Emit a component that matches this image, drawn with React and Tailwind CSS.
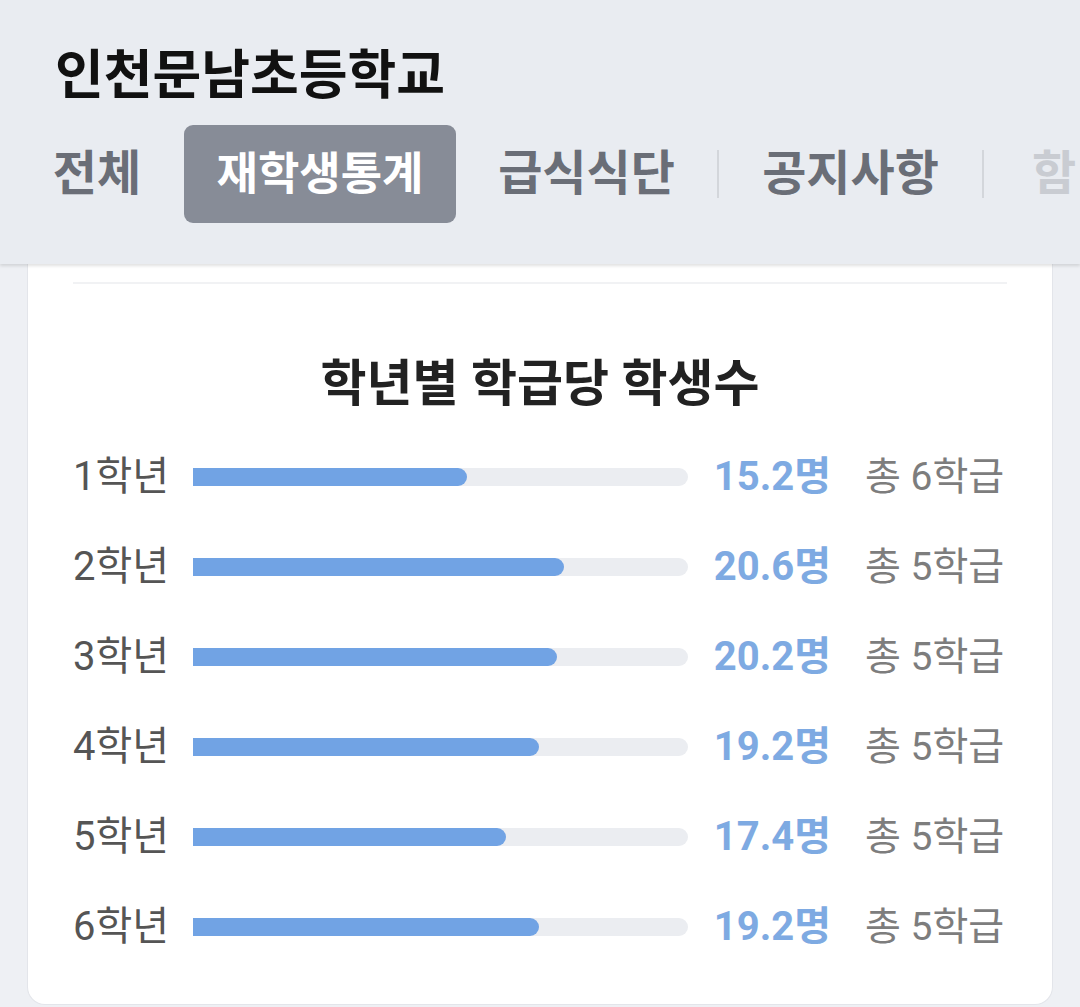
import React from "react";

const grades = [
  { label: "1학년", avg: 15.2, classes: 6 },
  { label: "2학년", avg: 20.6, classes: 5 },
  { label: "3학년", avg: 20.2, classes: 5 },
  { label: "4학년", avg: 19.2, classes: 5 },
  { label: "5학년", avg: 17.4, classes: 5 },
  { label: "6학년", avg: 19.2, classes: 5 },
];

const MAX = 27.5;

function Tabs() {
  return (
    <div className="flex h-[98px] items-center whitespace-nowrap font-bold leading-none">
      <span className="ml-[47px] flex w-[100px] justify-center text-[48px] text-[#6a6e77]">
        전체
      </span>
      <span className="ml-[37px] flex h-full w-[272px] items-center justify-center rounded-[9px] bg-[#878c97] text-[45px] text-white">
        재학생통계
      </span>
      <span className="flex w-[261px] justify-center text-[48px] text-[#6a6e77]">
        급식식단
      </span>
      <span className="h-[48px] w-[2px] shrink-0 bg-[#d3d6db]" />
      <span className="flex w-[263px] justify-center text-[48px] text-[#6a6e77]">
        공지사항
      </span>
      <span className="h-[48px] w-[2px] shrink-0 bg-[#d3d6db]" />
      <span className="ml-[48px] text-[48px] text-[#c9ccd2]">함</span>
    </div>
  );
}

function GradeRow({ grade }) {
  const pct = Math.min(100, (grade.avg / MAX) * 100);
  return (
    <div className="flex h-[90px] items-center whitespace-nowrap text-[40px] leading-none">
      <span className="w-[120px] shrink-0 text-[#555555]">{grade.label}</span>
      <div className="h-[18px] w-[495px] shrink-0 rounded-r-full bg-[#ebedf1]">
        <div
          className="h-full rounded-r-full bg-[#71a3e4]"
          style={{ width: `${pct}%` }}
        />
      </div>
      <span className="w-[143px] shrink-0 text-right font-bold text-[#7eaae2]">
        {grade.avg}명
      </span>
      <span className="ml-[34px] text-[39px] text-[#7d7d7d]">
        총 {grade.classes}학급
      </span>
    </div>
  );
}

export default function App() {
  return (
    <div
      className="h-[1007px] w-[1080px] overflow-hidden bg-[#eef0f4]"
      style={{ fontFamily: 'Roboto, "Noto Sans CJK KR", sans-serif' }}
    >
      <header className="relative z-10 h-[264px] overflow-hidden bg-[#e9ecf1] pt-[47px] shadow-[0_2px_3px_rgba(0,0,0,0.12)]">
        <h1 className="pl-[55px] text-[53px] font-bold leading-[58px] text-[#111111]">
          인천문남초등학교
        </h1>
        <div className="mt-[20px]">
          <Tabs />
        </div>
      </header>

      <div className="px-[27px]">
        <div className="rounded-b-[18px] border-x border-b border-[#e3e5ea] bg-white px-[45px] pb-[32px] pt-[18px]">
          <div className="h-[2px] bg-[#f1f2f4]" />
          <h2 className="mt-[70px] text-center text-[50px] font-semibold leading-[60px] text-[#222222]">
            학년별 학급당 학생수
          </h2>
          <div className="mt-[18px]">
            {grades.map((g) => (
              <GradeRow key={g.label} grade={g} />
            ))}
          </div>
        </div>
      </div>
    </div>
  );
}
